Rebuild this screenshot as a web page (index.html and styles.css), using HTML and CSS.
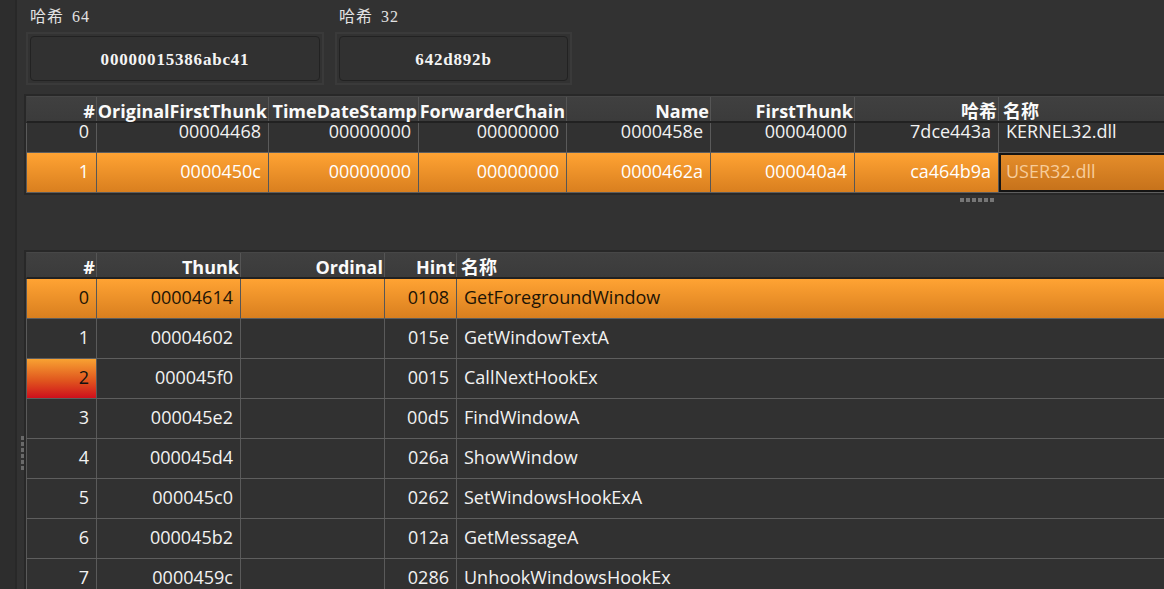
FILE: index.html
```html
<!DOCTYPE html>
<html lang="zh">
<head>
<meta charset="utf-8">
<title>Imports</title>
<link rel="stylesheet" href="styles.css">
</head>
<body>
<div class="app">
  <aside class="side"></aside>
  <main class="main">
    <section class="hashes">
      <div class="hash">
        <div class="hash-label">哈希 64</div>
        <div class="hash-frame w64"><div class="hash-box">00000015386abc41</div></div>
      </div>
      <div class="hash">
        <div class="hash-label">哈希 32</div>
        <div class="hash-frame w32"><div class="hash-box">642d892b</div></div>
      </div>
    </section>

    <div class="table t1">
      <div class="thead cols1">
        <div class="th">#</div>
        <div class="th">OriginalFirstThunk</div>
        <div class="th">TimeDateStamp</div>
        <div class="th">ForwarderChain</div>
        <div class="th">Name</div>
        <div class="th">FirstThunk</div>
        <div class="th">哈希</div>
        <div class="th left">名称</div>
      </div>
      <div class="rows">
        <div class="tr cols1 partial">
          <div class="td">0</div>
          <div class="td">00004468</div>
          <div class="td">00000000</div>
          <div class="td">00000000</div>
          <div class="td">0000458e</div>
          <div class="td">00004000</div>
          <div class="td">7dce443a</div>
          <div class="td left">KERNEL32.dll</div>
        </div>
        <div class="tr cols1 sel light">
          <div class="td">1</div>
          <div class="td">0000450c</div>
          <div class="td">00000000</div>
          <div class="td">00000000</div>
          <div class="td">0000462a</div>
          <div class="td">000040a4</div>
          <div class="td">ca464b9a</div>
          <div class="td left edit">USER32.dll</div>
        </div>
      </div>
    </div>

    <div class="splitter">
      <div class="grip"><i></i><i></i><i></i><i></i><i></i><i></i></div>
    </div>

    <div class="table t2">
      <div class="thead cols2">
        <div class="th">#</div>
        <div class="th">Thunk</div>
        <div class="th">Ordinal</div>
        <div class="th">Hint</div>
        <div class="th left">名称</div>
      </div>
      <div class="rows">
        <div class="tr cols2 sel dark">
          <div class="td">0</div><div class="td">00004614</div><div class="td"></div><div class="td">0108</div><div class="td left">GetForegroundWindow</div>
        </div>
        <div class="tr cols2">
          <div class="td">1</div><div class="td">00004602</div><div class="td"></div><div class="td">015e</div><div class="td left">GetWindowTextA</div>
        </div>
        <div class="tr cols2">
          <div class="td hot">2</div><div class="td">000045f0</div><div class="td"></div><div class="td">0015</div><div class="td left">CallNextHookEx</div>
        </div>
        <div class="tr cols2">
          <div class="td">3</div><div class="td">000045e2</div><div class="td"></div><div class="td">00d5</div><div class="td left">FindWindowA</div>
        </div>
        <div class="tr cols2">
          <div class="td">4</div><div class="td">000045d4</div><div class="td"></div><div class="td">026a</div><div class="td left">ShowWindow</div>
        </div>
        <div class="tr cols2">
          <div class="td">5</div><div class="td">000045c0</div><div class="td"></div><div class="td">0262</div><div class="td left">SetWindowsHookExA</div>
        </div>
        <div class="tr cols2">
          <div class="td">6</div><div class="td">000045b2</div><div class="td"></div><div class="td">012a</div><div class="td left">GetMessageA</div>
        </div>
        <div class="tr cols2">
          <div class="td">7</div><div class="td">0000459c</div><div class="td"></div><div class="td">0286</div><div class="td left">UnhookWindowsHookEx</div>
        </div>
      </div>
    </div>
  </main>
  <div class="vgrip"><i></i><i></i><i></i><i></i><i></i><i></i></div>
</div>
</body>
</html>
```
FILE: styles.css
```css
* { box-sizing: border-box; }
html, body { margin: 0; padding: 0; }
body {
  background: #323232;
  overflow: hidden;
  font-family: "Open Sans", "Noto Sans CJK SC", sans-serif;
  color: #f2f2f2;
}
.app {
  display: flex;
  height: 589px;
  position: relative;
}
.side {
  width: 17px;
  flex: none;
  background: #2d2d2d;
  border-right: 2px solid #282828;
}
.main {
  flex: 1;
  min-width: 0;
  overflow: hidden;
  padding-left: 7px;
}

/* hash boxes */
.hashes {
  display: flex;
  gap: 11px;
  padding: 7px 0 0 2px;
}
.hash-label {
  height: 20px;
  line-height: 20px;
  padding-left: 4px;
  margin-bottom: 5px;
  font-family: "Liberation Serif", "Noto Sans CJK SC", serif;
  font-size: 16px;
  letter-spacing: 1px;
  word-spacing: 3px;
  color: #e2e2e2;
}
.hash-frame {
  border: 2px solid #3a3a3a;
  padding: 2px;
}
.w64 { width: 298px; }
.w32 { width: 237px; }
.hash-box {
  height: 45px;
  padding-top: 2px;
  border: 1px solid #222;
  border-radius: 4px;
  background: #313131;
  display: flex;
  align-items: center;
  justify-content: center;
  font-family: "Liberation Serif", serif;
  font-weight: bold;
  font-size: 17px;
  letter-spacing: 0.8px;
  color: #f4f4f4;
}

/* tables */
.table {
  width: 1170px;
  border-left: 2px solid #282828;
  border-top: 2px solid #282828;
}
.t1 {
  margin-top: 9px;
  border-bottom: 2px solid #282828;
}
.cols1 { grid-template-columns: 70px 172px 150px 148px 144px 144px 144px 1fr; }
.cols2 { grid-template-columns: 70px 144px 144px 72px 1fr; }

.thead {
  display: grid;
  height: 27px;
  background: linear-gradient(#404040, #3b3b3b);
  border-left: 1px solid #3d3d3d;
  border-top: 1px solid #474747;
  border-bottom: 2px solid #212121;
}
.th {
  border-right: 1px solid #555;
  text-align: right;
  padding: 4px 1px 0 0;
  font-weight: bold;
  font-size: 18px;
  line-height: 20px;
  color: #fafafa;
  white-space: nowrap;
}
.th.left { text-align: left; padding-left: 4px; border-right: 0; }

.tr {
  display: grid;
  height: 40px;
  background: #313131;
  border-left: 1px solid #5a5a5a;
  border-bottom: 1px solid #5e5e5e;
}
.td {
  border-right: 1px solid #5a5a5a;
  text-align: right;
  padding: 0 7px;
  font-size: 18px;
  line-height: 37px;
  white-space: nowrap;
  overflow: hidden;
}
.td.left { text-align: left; border-right: 0; }

.tr.partial { height: 30px; }
.tr.partial .td { line-height: 17px; overflow: visible; }

.sel { background: linear-gradient(#ffa333, #d97f1f); }
.sel .td { border-right-color: #565656; }
.sel.light .td { color: #ffffff; }
.sel.dark .td { color: #1d1405; }
.sel .td.edit {
  background: linear-gradient(#e68e2b, #c5711a);
  box-shadow: inset 0 0 0 2px #141414;
  color: #f7cc9a;
}
.td.hot {
  background: linear-gradient(#f8a232, #e0561e 55%, #cf0f1c);
  color: #111;
}

/* splitter */
.splitter {
  height: 55px;
  padding: 3px 0 0 936px;
}
.grip { display: flex; gap: 2px; }
.grip i {
  display: block;
  width: 4px;
  height: 4px;
  background: #767676;
}
.vgrip {
  position: absolute;
  left: 21px;
  top: 436px;
  display: flex;
  flex-direction: column;
  gap: 2px;
}
.vgrip i {
  display: block;
  width: 3px;
  height: 4px;
  background: #6a6a6a;
}
```
